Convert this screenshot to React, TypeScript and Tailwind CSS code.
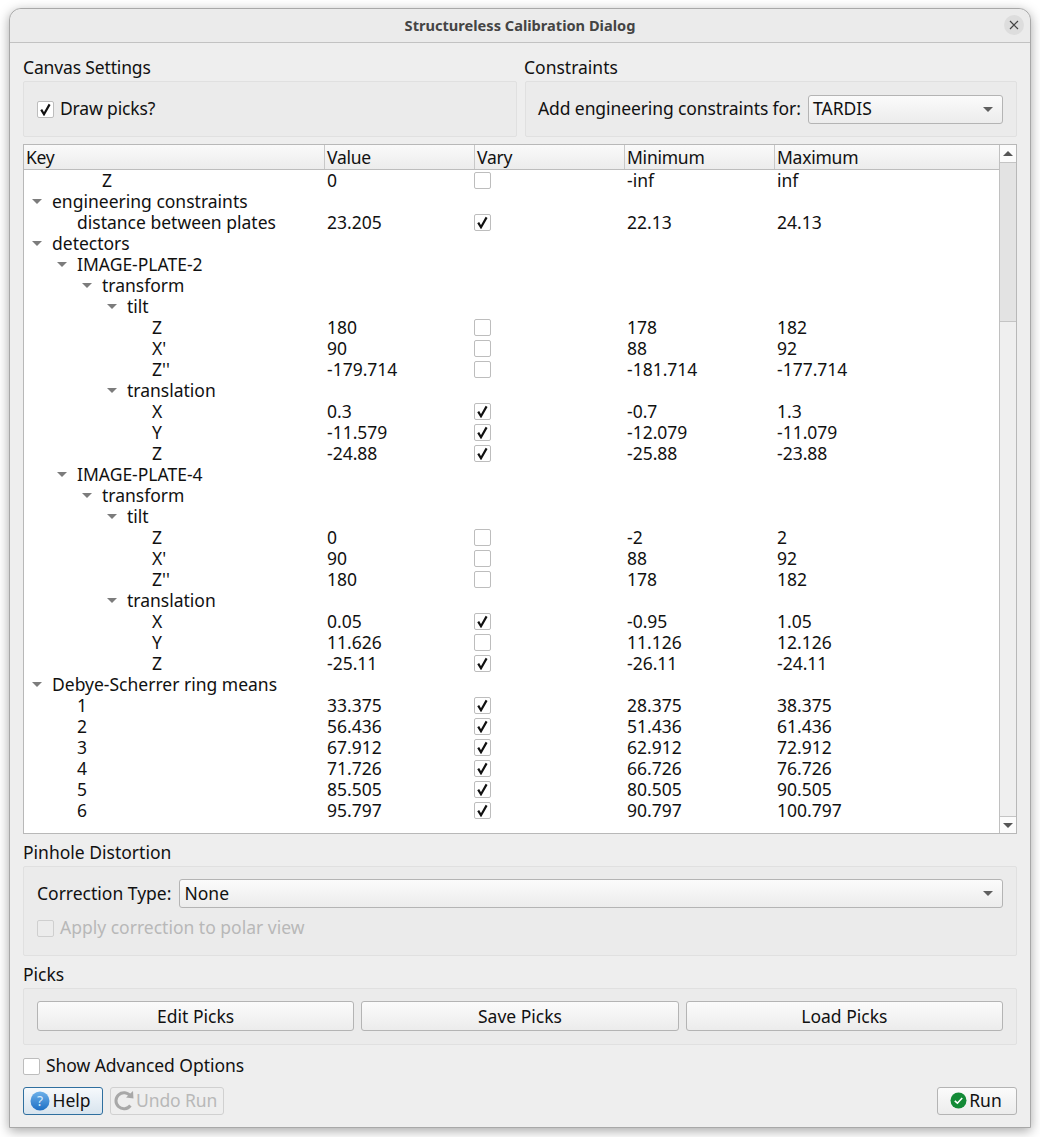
import { ReactNode } from 'react';

interface RowType {
  key: string;
  level: number;
  arrow?: boolean;
  value?: string;
  vary?: boolean;
  min?: string;
  max?: string;
}

const num = (
  key: string,
  level: number,
  value: string,
  vary: boolean,
  min: string,
  max: string
): RowType => ({ key, level, value, vary, min, max });

const rows: RowType[] = [
  num('Z', 2, '0', false, '-inf', 'inf'),
  { key: 'engineering constraints', level: 0, arrow: true },
  num('distance between plates', 1, '23.205', true, '22.13', '24.13'),
  { key: 'detectors', level: 0, arrow: true },
  { key: 'IMAGE-PLATE-2', level: 1, arrow: true },
  { key: 'transform', level: 2, arrow: true },
  { key: 'tilt', level: 3, arrow: true },
  num('Z', 4, '180', false, '178', '182'),
  num("X'", 4, '90', false, '88', '92'),
  num("Z''", 4, '-179.714', false, '-181.714', '-177.714'),
  { key: 'translation', level: 3, arrow: true },
  num('X', 4, '0.3', true, '-0.7', '1.3'),
  num('Y', 4, '-11.579', true, '-12.079', '-11.079'),
  num('Z', 4, '-24.88', true, '-25.88', '-23.88'),
  { key: 'IMAGE-PLATE-4', level: 1, arrow: true },
  { key: 'transform', level: 2, arrow: true },
  { key: 'tilt', level: 3, arrow: true },
  num('Z', 4, '0', false, '-2', '2'),
  num("X'", 4, '90', false, '88', '92'),
  num("Z''", 4, '180', false, '178', '182'),
  { key: 'translation', level: 3, arrow: true },
  num('X', 4, '0.05', true, '-0.95', '1.05'),
  num('Y', 4, '11.626', false, '11.126', '12.126'),
  num('Z', 4, '-25.11', true, '-26.11', '-24.11'),
  { key: 'Debye-Scherrer ring means', level: 0, arrow: true },
  num('1', 1, '33.375', true, '28.375', '38.375'),
  num('2', 1, '56.436', true, '51.436', '61.436'),
  num('3', 1, '67.912', true, '62.912', '72.912'),
  num('4', 1, '71.726', true, '66.726', '76.726'),
  num('5', 1, '85.505', true, '80.505', '90.505'),
  num('6', 1, '95.797', true, '90.797', '100.797'),
];

const levelClass = ['pl-[28px]', 'pl-[53px]', 'pl-[78px]', 'pl-[103px]', 'pl-[128px]'];
const arrowPos = ['left-[8px]', 'left-[33px]', 'left-[58px]', 'left-[83px]', 'left-[108px]'];

function Check({ checked, disabled }: { checked?: boolean; disabled?: boolean }) {
  return (
    <span
      className={`flex h-[17px] w-[17px] shrink-0 items-center justify-center rounded-[2px] border ${
        disabled ? 'border-[#cfcfcf] bg-[#ececec]' : 'border-[#bdbdbd] bg-white'
      }`}
    >
      {checked && (
        <svg width="13" height="13" viewBox="0 0 13 13">
          <path d="M2.2 6.6 L5 11.2 L10.6 1.4" fill="none" stroke="#111" strokeWidth="2.2" />
        </svg>
      )}
    </span>
  );
}

function DownArrow({ color = '#5f5f5f' }: { color?: string }) {
  return (
    <svg width="10" height="5" viewBox="0 0 10 5" className="shrink-0">
      <path d="M0 0 H10 L5 5 Z" fill={color} />
    </svg>
  );
}

function Combo({ text, className }: { text: string; className: string }) {
  return (
    <div
      className={`flex h-[29px] items-center justify-between rounded-[3px] border border-[#b4b4b4] bg-gradient-to-b from-[#fbfbfb] to-[#ececec] pl-[4px] pr-[9px] ${className}`}
    >
      <span className="pb-[1px]">{text}</span>
      <DownArrow />
    </div>
  );
}

function Group({ className, children }: { className: string; children: ReactNode }) {
  return (
    <div className={`rounded-[2px] border border-[#e0e0e0] bg-[#ebebeb] ${className}`}>
      {children}
    </div>
  );
}

function PushButton({ text }: { text: string }) {
  return (
    <button className="flex h-[30px] flex-1 items-center justify-center rounded-[3px] border border-[#b4b4b4] bg-gradient-to-b from-[#fbfbfb] to-[#ececec]">
      {text}
    </button>
  );
}

function HeaderCell({ text, first }: { text: string; first?: boolean }) {
  return (
    <div className={`flex h-[24px] items-center pl-[2px] tracking-[-0.25px] ${first ? '' : 'border-l border-[#c8c8c8]'}`}>
      {text}
    </div>
  );
}

function Row({ row }: { row: RowType }) {
  return (
    <div className="grid h-[21px] grid-cols-[300px_150px_150px_150px_1fr] items-center whitespace-nowrap leading-[19px]">
      <div className={`relative ${levelClass[row.level]}`}>
        {row.arrow && (
          <span className={`absolute top-[7px] ${arrowPos[row.level]}`}>
            <DownArrow color="#7c7c7c" />
          </span>
        )}
        {row.key}
      </div>
      <div className="pl-[3px]">{row.value}</div>
      <div>{row.vary !== undefined && <Check checked={row.vary} />}</div>
      <div className="pl-[3px]">{row.min}</div>
      <div className="pl-[3px]">{row.max}</div>
    </div>
  );
}

function App() {
  return (
    <div
      className="h-[1137px] w-[1040px] overflow-hidden bg-white pl-[9px] pt-[8px] text-[17.5px] leading-[21px] text-[#111111]"
      style={{ fontFamily: '"Noto Sans", sans-serif' }}
    >
      <div className="h-[1120px] w-[1022px] rounded-t-[12px] border border-[#a8a8a8] bg-[#eeeeee] shadow-[0_3px_12px_rgba(0,0,0,0.35)]">
        <div className="relative flex h-[34px] items-center justify-center rounded-t-[12px] border-b border-[#c2c2c2] bg-[#ebebeb] text-[14.6px] font-bold text-[#444444]">
          Structureless Calibration Dialog
          <span className="absolute right-[6px] top-[6px] flex h-[20px] w-[20px] items-center justify-center rounded-full bg-[#dddddd]">
            <svg width="10" height="10" viewBox="0 0 10 10">
              <path d="M1 1 L9 9 M9 1 L1 9" stroke="#444" strokeWidth="1.2" />
            </svg>
          </span>
        </div>

        <div className="px-[13px] pt-[14px]">
          <div className="flex gap-[8px]">
            <div className="w-[494px]">
              <div className="h-[24px] tracking-[-0.15px]">Canvas Settings</div>
              <Group className="flex h-[56px] items-center gap-[6px] pl-[13px]">
                <Check checked />
                <span className="pb-[2px] tracking-[-0.15px]">Draw picks?</span>
              </Group>
            </div>
            <div className="flex-1">
              <div className="-ml-px h-[24px]">Constraints</div>
              <Group className="flex h-[56px] items-center justify-between pl-[12px] pr-[13px]">
                <span className="pb-[2px] tracking-[-0.1px]">Add engineering constraints for:</span>
                <Combo text="TARDIS" className="w-[195px]" />
              </Group>
            </div>
          </div>

          <div className="mt-[7px] flex h-[690px] border border-[#b8b8b8] bg-white">
            <div className="flex-1">
              <div className="grid h-[25px] grid-cols-[300px_150px_150px_150px_1fr] border-b border-[#bdbdbd] bg-gradient-to-b from-[#fafafa] to-[#ececec]">
                <HeaderCell text="Key" first />
                <HeaderCell text="Value" />
                <HeaderCell text="Vary" />
                <HeaderCell text="Minimum" />
                <HeaderCell text="Maximum" />
              </div>
              {rows.map((row, index) => (
                <Row key={index} row={row} />
              ))}
            </div>
            <div className="flex w-[17px] flex-col border-l border-[#c0c0c0] bg-[#efefef]">
              <div className="flex h-[17px] items-center justify-center bg-[#fbfbfb]">
                <span className="flex rotate-180">
                  <DownArrow color="#555555" />
                </span>
              </div>
              <div className="h-[160px] border-y border-[#c4c4c4] bg-[#e3e3e3]" />
              <div className="flex-1" />
              <div className="flex h-[17px] items-center justify-center border-t border-[#c4c4c4] bg-[#fbfbfb]">
                <DownArrow color="#555555" />
              </div>
            </div>
          </div>

          <div className="mt-[8px] h-[24px]">Pinhole Distortion</div>
          <Group className="flex h-[90px] flex-col gap-[9px] px-[13px] pt-[12px]">
            <div className="flex items-center gap-[8px]">
              <span className="pb-[1px]">Correction Type:</span>
              <Combo text="None" className="flex-1" />
            </div>
            <div className="flex items-center gap-[6px] text-[#b8b8b8]">
              <Check disabled />
              <span className="pb-[2px]">Apply correction to polar view</span>
            </div>
          </Group>

          <div className="mt-[8px] h-[24px]">Picks</div>
          <Group className="flex h-[57px] items-start gap-[7px] px-[13px] pt-[12px]">
            <PushButton text="Edit Picks" />
            <PushButton text="Save Picks" />
            <PushButton text="Load Picks" />
          </Group>

          <div className="mt-[10px] flex items-center gap-[6px]">
            <Check />
            <span className="pb-[2px] tracking-[-0.05px]">Show Advanced Options</span>
          </div>

          <div className="mt-[9px] flex items-center justify-between">
            <div className="flex gap-[7px]">
              <button className="flex h-[28px] w-[80px] items-center justify-center gap-[2px] rounded-[3px] border border-[#2f6f9f] bg-gradient-to-b from-[#f6f9fc] to-[#d8e4ee] pb-[1px] pr-[5px]">
                <svg width="20" height="20" viewBox="0 0 20 20">
                  <defs>
                    <linearGradient id="helpBlue" x1="0" y1="0" x2="0" y2="1">
                      <stop offset="0" stopColor="#6db1ea" />
                      <stop offset="1" stopColor="#1f6fc4" />
                    </linearGradient>
                  </defs>
                  <circle cx="10" cy="10" r="9.5" fill="url(#helpBlue)" />
                  <text x="10" y="15" textAnchor="middle" fontSize="14" fill="#d8ebfb">
                    ?
                  </text>
                </svg>
                Help
              </button>
              <button className="flex h-[28px] w-[114px] items-center gap-[2px] rounded-[3px] border border-[#d0d0d0] bg-[#eeeeee] pb-[1px] pl-[3px] text-[#b8b8b8]">
                <svg width="20" height="21" viewBox="0 0 20 21">
                  <path d="M16.4 6 A8 8 0 1 0 16.4 15.5" fill="none" stroke="#a8a8a8" strokeWidth="3" />
                  <path d="M12 7.5 L19.5 8.5 L19 1 Z" fill="#a8a8a8" />
                </svg>
                <span className="tracking-[-0.1px]">Undo Run</span>
              </button>
            </div>
            <button className="flex h-[28px] w-[80px] items-center justify-center gap-[2px] rounded-[3px] border border-[#b4b4b4] bg-gradient-to-b from-[#fbfbfb] to-[#ececec] pb-[1px] pr-[2px]">
              <svg width="17" height="17" viewBox="0 0 17 17">
                <circle cx="8.5" cy="8.5" r="8" fill="#138a36" />
                <path d="M4.8 8.8 L7.4 11.2 L12.2 6" fill="none" stroke="#fff" strokeWidth="1.6" />
              </svg>
              Run
            </button>
          </div>
        </div>
      </div>
    </div>
  );
}

export default App;
